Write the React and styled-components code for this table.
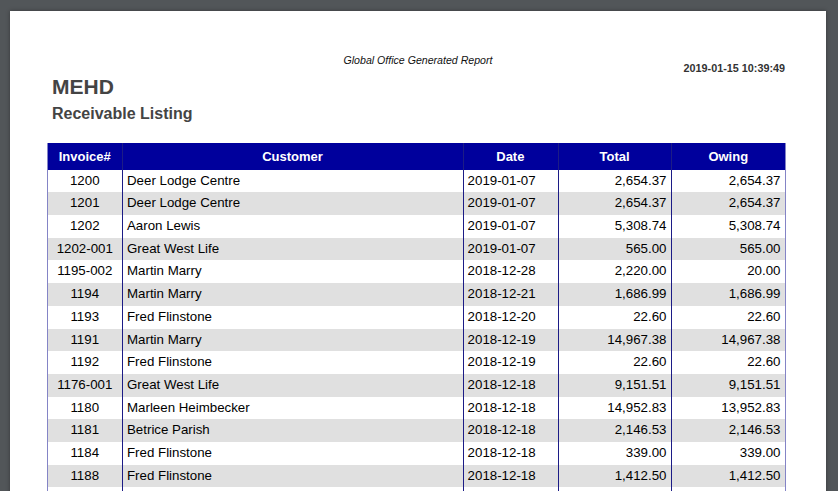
import React from "react";
import styled, { createGlobalStyle } from "styled-components";

const GlobalStyle = createGlobalStyle`
  html, body {
    margin: 0;
    padding: 0;
    background: #525659;
    overflow: hidden;
  }
  * {
    box-sizing: border-box;
  }
`;

const Viewer = styled.div`
  width: 838px;
  height: 491px;
  padding: 11px 0 0 10px;
  overflow: hidden;
`;

const Page = styled.div`
  width: 816px;
  height: 600px;
  background: #ffffff;
  box-shadow: 0 0 4px rgba(0, 0, 0, 0.35);
  padding: 43px 40px 0 37px;
  font-family: "Liberation Sans", Arial, sans-serif;
`;

const TopLine = styled.div`
  display: grid;
  grid-template-columns: 1fr auto 1fr;
  height: 21px;
`;

const ReportName = styled.div`
  grid-column: 2;
  font-size: 10.6px;
  line-height: 12px;
  font-style: italic;
  color: #111;
  padding-left: 3px;
`;

const Stamp = styled.div`
  grid-column: 3;
  justify-self: end;
  padding-top: 8.3px;
  padding-right: 1px;
  font-size: 10.8px;
  line-height: 12px;
  font-weight: bold;
  color: #333;
`;

const Company = styled.h1`
  margin: 0 0 0 5px;
  font-size: 21px;
  line-height: 24px;
  font-weight: bold;
  color: #444;
`;

const ReportTitle = styled.h2`
  margin: 4.5px 0 0 5px;
  font-size: 16px;
  line-height: 19px;
  font-weight: bold;
  color: #444;
`;

const Table = styled.div`
  margin-top: 20.2px;
  width: 739px;
  border-left: 1px solid #8484c6;
  border-right: 1px solid #8484c6;
`;

const Row = styled.div`
  display: grid;
  grid-template-columns: 75px 340.6px 95px 113.4px 113px;
  height: ${({ $head }) => ($head ? "27px" : "22.7px")};
  background: ${({ $head, $alt }) =>
    $head ? "#00009c" : $alt ? "#e0e0e0" : "#ffffff"};
`;

const Cell = styled.div`
  font-size: ${({ $head }) => ($head ? "13px" : "13.3px")};
  line-height: ${({ $head }) => ($head ? "27px" : "22.7px")};
  font-weight: ${({ $head }) => ($head ? "bold" : "normal")};
  color: ${({ $head }) => ($head ? "#ffffff" : "#000000")};
  text-align: ${({ $align }) => $align || "left"};
  padding: 0 4.5px 0 4px;
  white-space: nowrap;
  overflow: hidden;
  border-right: ${({ $last }) => ($last ? "none" : "1px solid #1c1c86")};
`;

const columns = [
  { key: "inv", label: "Invoice#", align: "center" },
  { key: "cust", label: "Customer", align: "left" },
  { key: "date", label: "Date", align: "left" },
  { key: "total", label: "Total", align: "right" },
  { key: "owing", label: "Owing", align: "right" },
];

const rows = [
  ["1200", "Deer Lodge Centre", "2019-01-07", "2,654.37", "2,654.37"],
  ["1201", "Deer Lodge Centre", "2019-01-07", "2,654.37", "2,654.37"],
  ["1202", "Aaron Lewis", "2019-01-07", "5,308.74", "5,308.74"],
  ["1202-001", "Great West Life", "2019-01-07", "565.00", "565.00"],
  ["1195-002", "Martin Marry", "2018-12-28", "2,220.00", "20.00"],
  ["1194", "Martin Marry", "2018-12-21", "1,686.99", "1,686.99"],
  ["1193", "Fred Flinstone", "2018-12-20", "22.60", "22.60"],
  ["1191", "Martin Marry", "2018-12-19", "14,967.38", "14,967.38"],
  ["1192", "Fred Flinstone", "2018-12-19", "22.60", "22.60"],
  ["1176-001", "Great West Life", "2018-12-18", "9,151.51", "9,151.51"],
  ["1180", "Marleen Heimbecker", "2018-12-18", "14,952.83", "13,952.83"],
  ["1181", "Betrice Parish", "2018-12-18", "2,146.53", "2,146.53"],
  ["1184", "Fred Flinstone", "2018-12-18", "339.00", "339.00"],
  ["1188", "Fred Flinstone", "2018-12-18", "1,412.50", "1,412.50"],
  ["", "", "", "", ""],
];

const App = () => {
  return (
    <Viewer>
      <GlobalStyle />
      <Page>
        <TopLine>
          <ReportName>Global Office Generated Report</ReportName>
          <Stamp>2019-01-15 10:39:49</Stamp>
        </TopLine>
        <Company>MEHD</Company>
        <ReportTitle>Receivable Listing</ReportTitle>
        <Table>
          <Row $head>
            {columns.map((col, i) => (
              <Cell
                key={col.key}
                $head
                $align="center"
                $last={i === columns.length - 1}
              >
                {col.label}
              </Cell>
            ))}
          </Row>
          {rows.map((row, r) => (
            <Row key={r} $alt={r % 2 === 1}>
              {row.map((value, i) => (
                <Cell
                  key={columns[i].key}
                  $align={columns[i].align}
                  $last={i === columns.length - 1}
                >
                  {value}
                </Cell>
              ))}
            </Row>
          ))}
        </Table>
      </Page>
    </Viewer>
  );
};

export default App;
